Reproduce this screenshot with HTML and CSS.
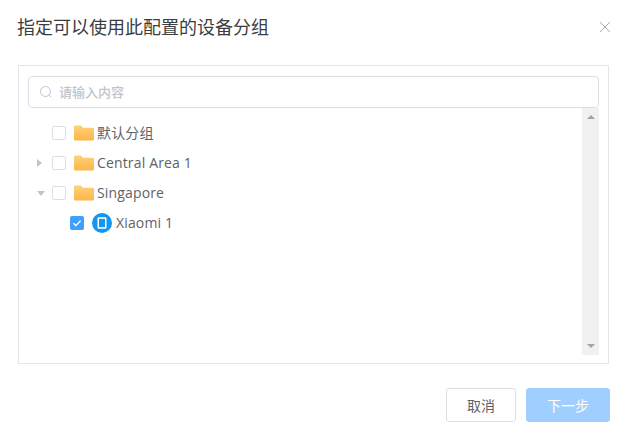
FILE: index.html
```html
<!DOCTYPE html>
<html lang="zh-CN">
<head>
	<meta charset="UTF-8">
	<title>指定可以使用此配置的设备分组</title>
	<link rel="stylesheet" href="styles.css">
</head>
<body>
<div class="dialog">
	<div class="header">
		<span class="title">指定可以使用此配置的设备分组</span>
		<svg class="close" width="12" height="12" viewBox="0 0 12 12"><path d="M1 1L11 11M11 1L1 11" stroke="#a9a9a9" stroke-width="1" fill="none"/></svg>
	</div>
	<div class="panel">
		<div class="search">
			<svg class="search-icon" width="14" height="14" viewBox="0 0 14 14"><circle cx="6.500" cy="6.500" r="5" stroke="#c0c4cc" fill="none"/><path d="M10 10.200L12 12.200" stroke="#c0c4cc" fill="none"/></svg>
			<span class="placeholder">请输入内容</span>
		</div>
		<div class="tree-wrap">
			<div class="tree">
				<div class="row">
					<span class="arrow"></span>
					<span class="check"></span>
					<svg class="folder" width="20" height="16" viewBox="0 0 20 16"><use href="#folder"/></svg>
					<span class="label">默认分组</span>
				</div>
				<div class="row">
					<span class="arrow right"></span>
					<span class="check"></span>
					<svg class="folder" width="20" height="16" viewBox="0 0 20 16"><use href="#folder"/></svg>
					<span class="label">Central Area 1</span>
				</div>
				<div class="row">
					<span class="arrow down"></span>
					<span class="check"></span>
					<svg class="folder" width="20" height="16" viewBox="0 0 20 16"><use href="#folder"/></svg>
					<span class="label">Singapore</span>
				</div>
				<div class="row child">
					<span class="check on">
						<svg width="14" height="14" viewBox="0 0 14 14"><path d="M3.500 7.200L6 9.600L10.600 4.600" stroke="#fff" stroke-width="1.400" fill="none"/></svg>
					</span>
					<svg class="device" width="20" height="20" viewBox="0 0 20 20">
						<circle cx="10" cy="10" r="10" fill="#1296f0"/>
						<rect x="5.500" y="4.200" width="9" height="11.600" rx="1.400" fill="#fff"/>
						<rect x="7" y="5.800" width="6" height="8.400" fill="#1296f0"/>
					</svg>
					<span class="label">Xiaomi 1</span>
				</div>
			</div>
			<div class="scrollbar">
				<span class="scroll-up"></span>
				<span class="scroll-down"></span>
			</div>
		</div>
	</div>
	<div class="footer">
		<button class="btn">取消</button>
		<button class="btn primary">下一步</button>
	</div>
</div>
<svg class="defs" width="0" height="0">
	<defs>
		<linearGradient id="folderFill" x1="0" y1="0" x2="0" y2="1">
			<stop offset="0" stop-color="#ffd27a"/>
			<stop offset="1" stop-color="#fdb548"/>
		</linearGradient>
		<symbol id="folder" viewBox="0 0 20 16">
			<path d="M0 2C0 1 .6.5 1.500.5H7L9 2.800H18.500C19.400 2.800 20 3.400 20 4.300V14C20 15 19.400 15.500 18.500 15.500H1.500C.6 15.500 0 15 0 14Z" fill="url(#folderFill)"/>
		</symbol>
	</defs>
</svg>
</body>
</html>
```

FILE: styles.css
```css
*{
	margin: 0;
	padding: 0;
	box-sizing: border-box;
}
body {
	width: 625px;
	height: 438px;
	overflow: hidden;
	background-color: #fff;
	font-family: "Open Sans", "Noto Sans CJK SC", sans-serif;
	color: #606266;
}
.dialog {
	padding: 0 15px 0 18px;
}
.header {
	height: 65px;
	display: flex;
	align-items: center;
	justify-content: space-between;
	padding: 0 0 11px 0;
}
.title {
	font-size: 18px;
	line-height: 24px;
	color: #3c3d40;
	margin-left: -1px;
}
.close {
	margin-right: -1px;
}
.panel {
	width: 591px;
	height: 299px;
	border: 1px solid #e4e4ea;
	padding: 10px 9px 8px 9px;
}
.search {
	height: 32px;
	border: 1px solid #dcdfe6;
	border-radius: 4px;
	display: flex;
	align-items: center;
	padding-left: 10px;
	padding-bottom: 1px;
	gap: 6px;
}
.placeholder {
	font-size: 13px;
	font-weight: 500;
	color: #c0c4cc;
}
.tree-wrap {
	height: 247px;
	display: flex;
	justify-content: space-between;
}
.tree {
	padding-top: 10px;
}
.row {
	height: 30px;
	display: flex;
	align-items: center;
	font-size: 14px;
}
.row.child {
	padding-left: 42px;
}
.arrow {
	width: 0;
	height: 0;
	margin-left: 9px;
	margin-right: 15px;
	border: 0 solid transparent;
}
.arrow.right {
	border-width: 4px 0 4px 5px;
	border-left-color: #c0c4cc;
	margin-right: 10px;
}
.arrow.down {
	border-width: 5px 4px 0 4px;
	border-top-color: #c0c4cc;
	margin-left: 9px;
	margin-right: 7px;
}
.check {
	width: 14px;
	height: 14px;
	border: 1px solid #dcdfe6;
	border-radius: 2px;
	background-color: #fff;
	flex-shrink: 0;
}
.check.on {
	border: none;
	background-color: #409eff;
	display: flex;
}
.folder {
	margin-left: 8px;
	margin-right: 3px;
}
.device {
	margin-left: 8px;
	margin-right: 4px;
}
.label {
	white-space: nowrap;
	line-height: 20px;
	margin-top: -1px;
	letter-spacing: .15px;
}
.scrollbar {
	width: 17px;
	background-color: #f1f1f1;
	display: flex;
	flex-direction: column;
	justify-content: space-between;
	align-items: center;
	padding: 7px 0;
}
.scroll-up {
	width: 0;
	height: 0;
	border-left: 4px solid transparent;
	border-right: 4px solid transparent;
	border-bottom: 4px solid #a3a3a3;
}
.scroll-down {
	width: 0;
	height: 0;
	border-left: 4px solid transparent;
	border-right: 4px solid transparent;
	border-top: 4px solid #a3a3a3;
}
.footer {
	display: flex;
	justify-content: flex-end;
	gap: 10px;
	padding-top: 24px;
}
.btn {
	width: 70px;
	height: 34px;
	border: 1px solid #dcdfe6;
	border-radius: 3px;
	background-color: #fff;
	color: #606266;
	font-size: 14px;
	font-family: inherit;
	padding-bottom: 1px;
}
.btn.primary {
	width: 84px;
	border-color: #a0cfff;
	background-color: #a0cfff;
	color: #fff;
}
.defs {
	position: absolute;
}
```
